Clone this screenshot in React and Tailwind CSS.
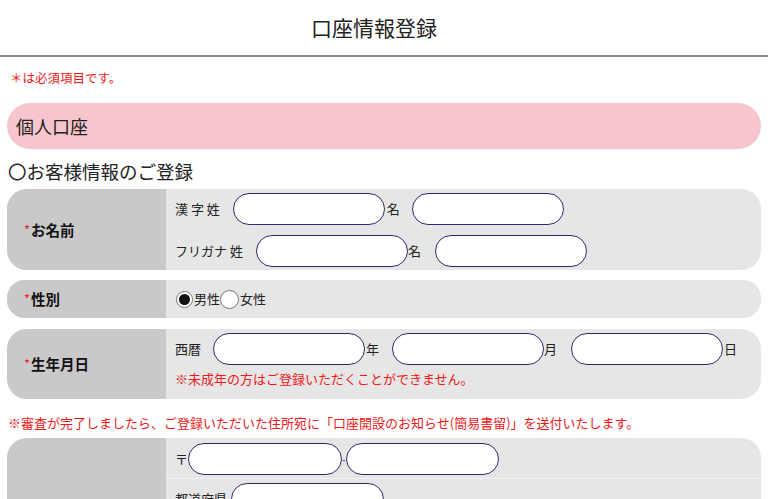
import React from "react";

const font = { fontFamily: '"Noto Sans CJK JP", "Noto Sans", sans-serif' };

function Input({ className = "" }) {
  return (
    <div
      className={
        "h-[32px] w-[152px] shrink-0 rounded-full border-[1.5px] border-[#2e2a6a] bg-white " +
        className
      }
    />
  );
}

function Label({ children }) {
  return (
    <div className="flex w-[159px] shrink-0 items-center bg-[#c9c9c9] pl-[17px] text-[14.5px] font-bold text-[#111]">
      <span className="mr-[1px] text-[13px] font-normal text-[#f01818]">*</span>
      {children}
    </div>
  );
}

export default function App() {
  return (
    <div style={font} className="w-[768px] bg-white text-[#222]">
      <header className="flex h-[57px] items-center justify-center border-b-2 border-[#8a8a8a] pr-[20px]">
        <h1 className="text-[21px] font-normal leading-none text-[#222]">口座情報登録</h1>
      </header>

      <div className="px-[7px]">
        <p className="mt-[12px] pl-[3px] text-[12.5px] leading-[18px] text-[#f01818]">
          ＊は必須項目です。
        </p>

        <div className="mt-[16px] flex h-[46px] items-center rounded-full bg-[#f7c6cd] pl-[9px] text-[18px] text-[#222]">
          個人口座
        </div>

        <h2 className="mt-[11px] pl-[1px] text-[18.5px] font-normal leading-[22px] text-[#222]">
          〇お客様情報のご登録
        </h2>

        {/* Name */}
        <div className="mt-[7px] flex overflow-hidden rounded-[20px] bg-[#e6e6e6]">
          <Label>お名前</Label>
          <div className="flex flex-col gap-[10px] pb-[3px] pl-[9px] pt-[4px] text-[13px]">
            <div className="flex items-center">
              <span>漢 字 姓</span>
              <Input className="ml-[13px]" />
              <span className="ml-[2px]">名</span>
              <Input className="ml-[12px]" />
            </div>
            <div className="flex items-center">
              <span>フリガナ 姓</span>
              <Input className="ml-[13px]" />
              <span>名</span>
              <Input className="ml-[14px]" />
            </div>
          </div>
        </div>

        {/* Gender */}
        <div className="mt-[10px] flex h-[38px] overflow-hidden rounded-[18px] bg-[#e6e6e6]">
          <Label>性別</Label>
          <div className="flex items-center pl-[10px] text-[13px]">
            <div className="flex h-[17px] w-[17px] items-center justify-center rounded-full border border-[#767676] bg-white">
              <div className="h-[11px] w-[11px] rounded-full bg-[#111]" />
            </div>
            <span className="ml-[1px]">男性</span>
            <div className="h-[19px] w-[19px] rounded-full border border-[#767676] bg-white" />
            <span className="ml-[1px]">女性</span>
          </div>
        </div>

        {/* Birthday */}
        <div className="mt-[11px] flex overflow-hidden rounded-[20px] bg-[#e6e6e6]">
          <Label>生年月日</Label>
          <div className="flex flex-col pb-[11px] pl-[9px] pt-[4px] text-[13px]">
            <div className="flex items-center">
              <span>西暦</span>
              <Input className="ml-[12px]" />
              <span className="ml-[1px]">年</span>
              <Input className="ml-[13px]" />
              <span>月</span>
              <Input className="ml-[14px]" />
              <span className="ml-[1px]">日</span>
            </div>
            <p className="mt-[5px] leading-[18px] text-[#f01818]">
              ※未成年の方はご登録いただくことができません。
            </p>
          </div>
        </div>

        <p className="mt-[15px] pl-[1px] text-[13px] leading-[18px] text-[#f01818]">
          ※審査が完了しましたら、ご登録いただいた住所宛に「口座開設のお知らせ(簡易書留)」を送付いたします。
        </p>

        {/* Address */}
        <div className="mt-[6px] flex overflow-hidden rounded-t-[20px] bg-[#e6e6e6]">
          <div className="w-[159px] shrink-0 bg-[#c9c9c9]" />
          <div className="flex flex-1 flex-col text-[13px]">
            <div className="flex h-[41px] items-center border-b border-[#f2f2f2] pl-[9px] pt-[1px]">
              <span>〒</span>
              <Input className="h-[31px] w-[154px]" />
              <span className="text-[10px]">-</span>
              <Input className="h-[31px] w-[153px]" />
            </div>
            <div className="flex h-[44px] items-start pl-[9px] pt-[4px]">
              <span className="mt-[6px]">都道府県</span>
              <Input className="ml-[4px] h-[31px] w-[153px]" />
            </div>
          </div>
        </div>
      </div>
    </div>
  );
}
